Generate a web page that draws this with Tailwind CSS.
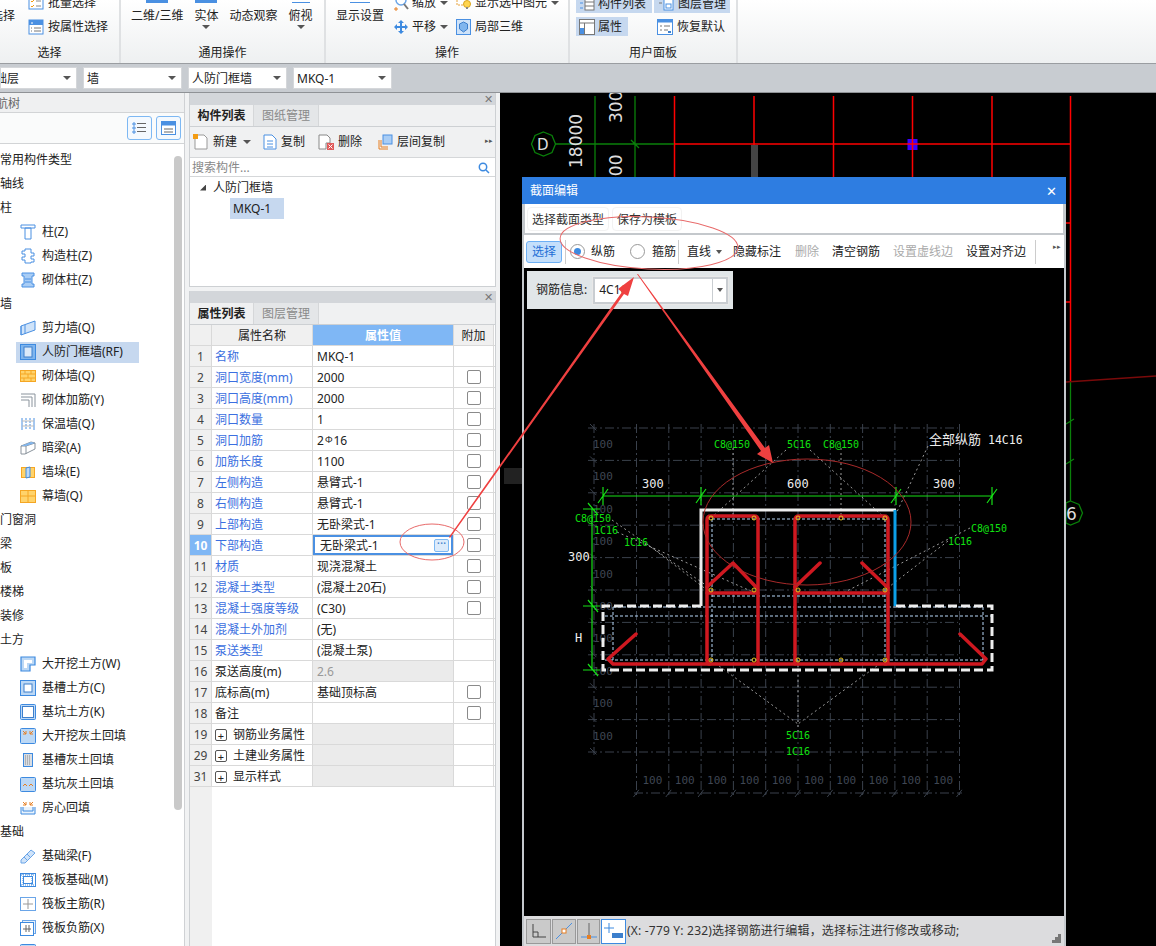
<!DOCTYPE html>
<html lang="zh">
<head>
    <meta charset="UTF-8">
    <title>截面编辑</title>
    <script src="https://cdn.jsdelivr.net/npm/@tailwindcss/browser@4"></script>
</head>
<body class="m-0">
<div class="relative w-[1156px] h-[946px] overflow-hidden bg-[#f1f2f3] text-[12px] leading-4 text-[#222] font-['Noto_Sans','Noto_Sans_CJK_SC',sans-serif]">

    <!-- ribbon -->
    <div class="flex h-[64px] bg-gradient-to-b from-white to-[#eef0f1] border-b border-[#9a9da1] overflow-hidden">
        <div class="flex flex-col -ml-[20px] w-[141px] shrink-0 border-r-2 border-[#dfe1e3]">
            <div class="flex h-[45px]">
                <div class="pl-[11px] pt-[8px] w-[48px]">选择</div>
                <div class="flex flex-col gap-2 -mt-[5px]">
                    <div class="flex items-center gap-[4px]"><svg width="16" height="16" viewBox="0 0 16 16"><rect x="1" y="2" width="14" height="12" fill="#fff" stroke="#4a90e2"/><path d="M3 6l1 1 2-2M3 11l1 1 2-2" stroke="#f39c12" fill="none"/><path d="M8 6h5M8 11h5" stroke="#888"/></svg>批量选择</div>
                    <div class="flex items-center gap-[4px]"><svg width="16" height="16" viewBox="0 0 16 16"><rect x="1" y="1" width="14" height="14" fill="#fff" stroke="#4a90e2"/><rect x="1" y="1" width="14" height="5" fill="#4a90e2"/><path d="M3 4h2" stroke="#fff"/><path d="M3 9h1M6 9h7M3 12h1M6 12h7" stroke="#777"/></svg>按属性选择</div>
                </div>
            </div>
            <div class="text-center">选择</div>
        </div>
        <div class="flex flex-col w-[205px] shrink-0 border-r-2 border-[#dfe1e3]">
            <div class="flex h-[45px] pl-[10px] gap-[11px]">
                <div class="flex flex-col items-center"><span class="w-[22px] h-[3px] bg-[#4a90e2]"></span><span class="mt-[5px]">二维/三维</span></div>
                <div class="flex flex-col items-center"><span class="w-[22px] h-[3px] bg-[#4a90e2]"></span><span class="mt-[5px]">实体</span><span class="mt-[1px] border-x-[4px] border-t-[4px] border-x-transparent border-t-[#555]"></span></div>
                <div class="flex flex-col items-center"><span class="h-[3px]"></span><span class="mt-[5px]">动态观察</span></div>
                <div class="flex flex-col items-center"><span class="w-[18px] h-[3px] border-b border-[#4a90e2]"></span><span class="mt-[5px]">俯视</span><span class="mt-[1px] border-x-[4px] border-t-[4px] border-x-transparent border-t-[#555]"></span></div>
            </div>
            <div class="text-center">通用操作</div>
        </div>
        <div class="flex flex-col w-[244px] shrink-0 border-r-2 border-[#dfe1e3]">
            <div class="flex h-[45px] pl-[10px]">
                <div class="flex flex-col items-center w-[48px]"><span class="w-[20px] h-[3px] border-b border-[#4a90e2]"></span><span class="mt-[5px]">显示设置</span></div>
                <div class="flex flex-col gap-2 -mt-[5px] ml-[9px] w-[63px]">
                    <div class="flex items-center gap-[3px]"><svg width="16" height="16" viewBox="0 0 16 16"><circle cx="8" cy="5" r="5" fill="#fff" stroke="#6aa5e8" stroke-width="1.5"/><path d="M11 9l4 5" stroke="#777" stroke-width="2"/><path d="M1 14h4M3 12v4" stroke="#e67e22"/></svg>缩放<span class="ml-[1px] border-x-[4px] border-t-[4px] border-x-transparent border-t-[#555]"></span></div>
                    <div class="flex items-center gap-[3px]"><svg width="16" height="16" viewBox="0 0 16 16"><path d="M8 1l3 3H9v3h3V5l3 3-3 3V9H9v3h2l-3 3-3-3h2V9H4v2L1 8l3-3v2h3V4H5z" fill="#3d8ae0"/></svg>平移<span class="ml-[1px] border-x-[4px] border-t-[4px] border-x-transparent border-t-[#555]"></span></div>
                </div>
                <div class="flex flex-col gap-2 -mt-[5px]">
                    <div class="flex items-center gap-[4px]"><svg width="15" height="16" viewBox="0 0 15 16"><path d="M1 2h8v8H1z" fill="#fff" stroke="#e6a23c" stroke-dasharray="2 1"/><circle cx="11" cy="9" r="3.5" fill="#ffd54f" stroke="#d9a520"/><path d="M10 13h2" stroke="#888" stroke-width="2"/></svg>显示选中图元<span class="border-x-[4px] border-t-[4px] border-x-transparent border-t-[#555]"></span></div>
                    <div class="flex items-center gap-[4px]"><svg width="15" height="16" viewBox="0 0 15 16"><rect x="0.5" y="0.5" width="14" height="15" fill="#cfe3f9" stroke="#4a90e2"/><path d="M7.5 3l4 2v5l-4 3-4-3V5z" fill="#7fb5ee" stroke="#3d7fcc"/></svg>局部三维</div>
                </div>
            </div>
            <div class="text-center">操作</div>
        </div>
        <div class="flex flex-col w-[168px] shrink-0 border-r-2 border-[#dfe1e3]">
            <div class="h-[50px] pl-[6px] -mt-[5px]">
                <div class="flex gap-[2px] h-[18px]">
                    <div class="flex items-center gap-[3px] w-[76px] pl-[3px] bg-[#c6d8ef]"><svg width="16" height="16" viewBox="0 0 16 16"><path d="M1 2h3M1 7h3M1 12h3" stroke="#4a90e2"/><rect x="6" y="1" width="9" height="13" fill="#fff" stroke="#777"/><path d="M6 6h9M6 10h9" stroke="#777"/></svg>构件列表</div>
                    <div class="flex items-center gap-[4px] w-[76px] pl-[4px] bg-[#c6d8ef]"><svg width="16" height="16" viewBox="0 0 16 16"><path d="M1 3h3M1 7h3" stroke="#777"/><rect x="6" y="1" width="9" height="13" fill="#fff" stroke="#4a90e2"/><rect x="8" y="8" width="5" height="4" fill="#fff" stroke="#4a90e2"/></svg>图层管理</div>
                </div>
                <div class="flex mt-[4px]">
                    <div class="flex items-center gap-[3px] w-[52px] h-[19px] pl-[3px] bg-[#c6d8ef]"><svg width="16" height="16" viewBox="0 0 16 16"><rect x="0.5" y="0.5" width="15" height="15" fill="#fff" stroke="#777"/><path d="M0 4h16M5.500 4v12" stroke="#777"/><rect x="1" y="9" width="4" height="6" fill="#4a90e2"/></svg>属性</div>
                    <div class="flex items-center gap-[4px] ml-[29px]"><svg width="16" height="16" viewBox="0 0 16 16"><rect x="0.5" y="0.5" width="15" height="15" fill="#fff" stroke="#4a90e2"/><rect x="0.5" y="0.5" width="15" height="3" fill="#4a90e2"/><path d="M3 7h2M7 7h6M3 11h2M7 11h4" stroke="#777"/><path d="M11 13l3 0" stroke="#3d7fcc" stroke-width="2"/></svg>恢复默认</div>
                </div>
            </div>
            <div class="text-center">用户面板</div>
        </div>
    </div>

    <!-- component selectors -->
    <div class="flex gap-[6px] h-[29px] pt-[3px] bg-[#c8ccd1] border-b border-[#8f9296]">
        <div class="flex items-center justify-between w-[77px] h-[22px] pr-[5px] bg-white border border-[#d5d7da] overflow-hidden"><span class="-ml-[18px] pt-[1px]">基础层</span><span class="border-x-[4px] border-t-[4px] border-x-transparent border-t-[#555]"></span></div>
        <div class="flex items-center justify-between w-[99px] h-[22px] pl-[3px] pr-[5px] bg-white border border-[#d5d7da]"><span class="pt-[1px]">墙</span><span class="border-x-[4px] border-t-[4px] border-x-transparent border-t-[#555]"></span></div>
        <div class="flex items-center justify-between w-[99px] h-[22px] pl-[3px] pr-[5px] bg-white border border-[#d5d7da]"><span class="pt-[1px]">人防门框墙</span><span class="border-x-[4px] border-t-[4px] border-x-transparent border-t-[#555]"></span></div>
        <div class="flex items-center justify-between w-[99px] h-[22px] pl-[3px] pr-[5px] bg-white border border-[#d5d7da]"><span class="pt-[1px]">MKQ-1</span><span class="border-x-[4px] border-t-[4px] border-x-transparent border-t-[#555]"></span></div>
    </div>

    <div class="flex h-[853px]">
        <!-- navigation tree -->
        <div class="relative w-[185px] shrink-0 bg-white border-r border-[#cfd1d4] overflow-hidden">
            <div class="h-[20px] bg-[#eff0f1] border-b border-[#d2d4d6] text-[#666] leading-[21px]"><span class="-ml-[16px]">导航树</span></div>
            <div class="flex justify-end gap-[4px] h-[31px] pt-[3px] pr-[3px] border-b border-[#d2d4d6] bg-[#fafbfb]">
                <div class="flex items-center justify-center w-[25px] h-[24px] rounded-[3px] border border-[#7db8f3] bg-[#f4f9fe]"><svg width="15" height="14" viewBox="0 0 15 14"><path d="M1 2h2v2H1zM1 6h2v2H1zM1 10h2v2H1z" fill="none" stroke="#4a90e2"/><path d="M5 2.500h9M5 6.500h9M5 10.500h9" stroke="#666"/></svg></div>
                <div class="flex items-center justify-center w-[25px] h-[24px] rounded-[3px] border border-[#7db8f3] bg-[#f4f9fe]"><svg width="15" height="14" viewBox="0 0 15 14"><rect x="0.500" y="0.500" width="14" height="13" fill="#fff" stroke="#4a90e2"/><rect x="0.500" y="0.500" width="14" height="4" fill="#4a90e2"/><path d="M3 8h9M3 11h9" stroke="#666"/></svg></div>
            </div>
            <div id="navTree" class="pt-[4px]"></div>
            <div class="absolute left-[174px] top-[63px] w-[8px] h-[654px] rounded-[4px] bg-[#c9c9c9]"></div>
        </div>

        <!-- list and property panels -->
        <div class="flex flex-col w-[307px] ml-[4px] shrink-0">
            <div class="h-[194px] border-x border-b border-[#cdd0d3] bg-white flex flex-col">
                <div class="relative h-[12px] bg-[#d3d6da]"><span class="absolute right-[2px] -top-[2px] text-[#777] text-[11px]">✕</span></div>
                <div class="flex h-[22px] bg-[#f0f1f2] border-b border-[#cdd0d3]">
                    <div class="w-[64px] text-center leading-[22px] font-bold bg-[#eff0f1] border-r border-[#d5d7d9]">构件列表</div>
                    <div class="w-[65px] text-center leading-[22px] text-[#8a8a8a] bg-[#e4e6e8] border-r border-[#d5d7d9]">图纸管理</div>
                </div>
                <div class="relative flex items-center h-[30px] bg-[#f0f1f2] pl-[3px]">
                    <svg width="15" height="16" viewBox="0 0 15 16"><path d="M2 1h9l3 3v11H2z" fill="#fff" stroke="#999"/><path d="M0 0h5v5H0z" fill="#f39c12"/></svg>
                    <span class="ml-[5px]">新建</span><span class="ml-[6px] border-x-[4px] border-t-[4px] border-x-transparent border-t-[#555]"></span>
                    <svg class="ml-[12px]" width="14" height="16" viewBox="0 0 14 16"><path d="M1 1h8l4 4v10H1z" fill="#fff" stroke="#4a90e2"/><path d="M4 7h6M4 10h6M4 13h6" stroke="#4a90e2"/></svg>
                    <span class="ml-[4px]">复制</span>
                    <svg class="ml-[13px]" width="16" height="16" viewBox="0 0 16 16"><path d="M1 1h8l3 3v5H8v6H1z" fill="#fff" stroke="#888"/><rect x="9" y="9" width="7" height="7" fill="#e05a5a"/><path d="M10.500 10.500l4 4M14.500 10.500l-4 4" stroke="#fff"/></svg>
                    <span class="ml-[4px]">删除</span>
                    <svg class="ml-[16px]" width="15" height="16" viewBox="0 0 15 16"><path d="M1 15V6M1 15h9M3 13V6M3 13h7" stroke="#e67e22" fill="none"/><rect x="5" y="1" width="9" height="9" fill="#a9cdf5" stroke="#4a90e2"/></svg>
                    <span class="ml-[4px]">层间复制</span>
                    <span class="absolute right-[2px] top-[10px] text-[7px] leading-[8px] text-[#555]">▸▸</span>
                </div>
                <div class="flex items-center justify-between h-[20px] pl-[2px] pr-[5px] pt-[1px] bg-white border-y border-[#d5d7d9] text-[#888]">
                    <span>搜索构件...</span>
                    <svg width="12" height="12" viewBox="0 0 12 12"><circle cx="5" cy="5" r="3.700" fill="none" stroke="#3d8ae0" stroke-width="1.500"/><path d="M8 8l3 3" stroke="#3d8ae0" stroke-width="1.500"/></svg>
                </div>
                <div class="flex items-center h-[21px] pl-[10px]"><span class="w-[6px] h-[6px] bg-[#444] [clip-path:polygon(100%_0,100%_100%,0_100%)]"></span><span class="ml-[7px]">人防门框墙</span></div>
                <div class="w-[54px] h-[21px] ml-[40px] pl-[3px] leading-[21px] bg-[#c6d8ef]">MKQ-1</div>
            </div>
            <div class="flex-1 mt-[4px] border-x border-[#cdd0d3] bg-white flex flex-col">
                <div class="relative h-[12px] bg-[#d3d6da]"><span class="absolute right-[2px] -top-[2px] text-[#777] text-[11px]">✕</span></div>
                <div class="flex h-[22px] bg-[#f0f1f2] border-b border-[#cdd0d3]">
                    <div class="w-[64px] text-center leading-[22px] font-bold bg-[#eff0f1] border-r border-[#d5d7d9]">属性列表</div>
                    <div class="w-[65px] text-center leading-[22px] text-[#8a8a8a] bg-[#e4e6e8] border-r border-[#d5d7d9]">图层管理</div>
                </div>
                <div id="propTable"></div>
                <div class="flex-1 w-[22px] bg-[#f0f0f0]"></div>
            </div>
        </div>

        <!-- drawing area -->
        <div class="relative flex-1 ml-[4px] bg-black overflow-hidden">
            <svg class="absolute inset-0" width="656" height="853" viewBox="500 93 656 853">
                <g stroke="#ff0000" stroke-width="1.500">
                    <path d="M674.500 96V177M754 96V145M833.500 96V177M912.500 96V177M992 96V177M1070.500 96V381"/>
                    <path d="M674 144H1070.500"/>
                    <path d="M1066 223h4M1066 302h4"/>
                </g>
                <g stroke="#0a800a" stroke-width="1.300" fill="none">
                    <path d="M595 96V177M635 96V177M555 144H674M631 140l8 8"/>
                    <path d="M543.500 132l8.500 3.500 3.500 8.500-3.500 8.500-8.500 3.500-8.500-3.500-3.500-8.500 3.500-8.500z"/>
                    <path d="M1070.500 381V501M1066 424l8-5M1066 464l8-5"/>
                    <path d="M1070.500 501l8.500 3.500 3.500 8.500-3.500 8.500-8.500 3.500-4.500-2V503z"/>
                </g>
                <path d="M1066 382L1156 376" stroke="#7a0a0a" stroke-width="1.500"/>
                <rect x="751" y="145" width="7" height="32" fill="#444"/>
                <rect x="907.500" y="139" width="10" height="11" fill="#3d00ff"/>
                <path d="M912.500 139v11M907.500 144h10" stroke="#ff0000" stroke-width="1.500"/>
                <rect x="504" y="468" width="18" height="16" fill="#222"/>
                <g fill="#ddd" font-size="17" font-family="'DejaVu Sans'">
                    <text x="0" y="0" transform="translate(622,123) rotate(-90)">300</text>
                    <text x="0" y="0" transform="translate(582,168) rotate(-90)">18000</text>
                    <text x="0" y="0" transform="translate(622,187) rotate(-90)">300</text>
                    <text x="537" y="150" font-size="15">D</text>
                </g>
                <text x="1066" y="520" fill="#ddd" font-size="17" font-family="'DejaVu Sans'">6</text>
            </svg>
            <div class="absolute left-[-4px] top-[407px] flex items-center w-[4px] h-[453px] bg-[#3d4147]"><span class="-mt-[296px] border-y-[3px] border-r-[3px] border-y-transparent border-r-[#9aa0a6]"></span></div>

            <!-- section editor window -->
            <div class="absolute left-[22px] top-[84px] w-[544px] h-[769px] flex flex-col bg-[#c4c8cc] border-x-[2px] border-[#c4c8cc]">
                <div class="flex items-center justify-between h-[27px] -mx-[2px] pl-[8px] pr-[9px] bg-[#2e7de1] text-white"><span>截面编辑</span><span class="text-[13px]">✕</span></div>
                <div class="flex items-center gap-[3px] h-[29px] mx-[1px] bg-white pl-[2px]">
                    <span class="px-[4px] h-[24px] leading-[24px] text-[#333] rounded-sm border border-[#f2f2f2]">选择截面类型</span>
                    <span class="px-[4px] h-[24px] leading-[24px] text-[#333] rounded-sm border border-[#f2f2f2]">保存为模板</span>
                </div>
                <div class="relative flex items-center h-[33px] mt-[2px] bg-white pl-[2px]">
                    <span class="w-[36px] h-[22px] leading-[20px] text-center text-[#1f6fd6] rounded-[3px] bg-[#c4dffb] border border-[#6db0f5]">选择</span>
                    <span class="ml-[3px] w-px h-[24px] bg-[#ccc]"></span>
                    <span class="flex items-center justify-center ml-[4px] w-[15px] h-[15px] rounded-full border border-[#999]"><span class="w-[7px] h-[7px] rounded-full bg-[#3d8ae0]"></span></span>
                    <span class="ml-[6px]">纵筋</span>
                    <span class="ml-[15px] w-[15px] h-[15px] rounded-full border border-[#999]"></span>
                    <span class="ml-[7px]">箍筋</span>
                    <span class="ml-[2px] w-px h-[24px] bg-[#ccc]"></span>
                    <span class="ml-[8px]">直线</span>
                    <span class="ml-[5px] border-x-[3px] border-t-[4px] border-x-transparent border-t-[#555]"></span>
                    <span class="ml-[11px]">隐藏标注</span>
                    <span class="ml-[14px] text-[#aaa]">删除</span>
                    <span class="ml-[13px]">清空钢筋</span>
                    <span class="ml-[13px] text-[#aaa]">设置虚线边</span>
                    <span class="ml-[13px]">设置对齐边</span>
                    <span class="ml-[9px] w-px h-[24px] bg-[#ccc]"></span>
                    <span class="absolute right-[3px] top-[8px] text-[7px] leading-[8px] text-[#555]">▸▸</span>
                </div>
                <div class="relative flex-1 bg-black overflow-hidden">
                    <div class="absolute left-[3px] top-[3px] flex items-center w-[206px] h-[38px] pl-[9px] bg-[#e1e6e8]">
                        <span>钢筋信息:</span>
                        <div class="flex items-center ml-[6px] w-[135px] h-[27px] bg-white border-2 border-[#c9cdd1] outline outline-1 outline-[#e8e8e8]">
                            <span class="flex-1 pl-[4px]">4C16</span>
                            <span class="flex items-center justify-center w-[14px] h-full border-l border-[#c9cdd1]"><span class="border-x-[3px] border-t-[4px] border-x-transparent border-t-[#555]"></span></span>
                        </div>
                    </div>
                    <svg id="cad" class="block" width="540" height="648" viewBox="524 268 540 648"></svg>
                </div>
                <div class="relative flex items-center gap-[1px] h-[30px] pl-[2px] bg-[#dcdcde] text-[#333]">
                    <span class="flex items-center justify-center w-[25px] h-[25px] bg-[#cacaca] border border-[#999]"><svg width="16" height="16" viewBox="0 0 16 16"><path d="M2 1v13h13M2 9h5v5" fill="none" stroke="#444"/></svg></span>
                    <span class="flex items-center justify-center w-[24px] h-[25px] bg-[#cacaca] border border-[#999]"><svg width="18" height="18" viewBox="0 0 18 18"><path d="M1 17L17 1" stroke="#4a90e2"/><rect x="7" y="7" width="4" height="4" fill="#fff" stroke="#e67e22"/></svg></span>
                    <span class="flex items-center justify-center w-[23px] h-[25px] bg-[#cacaca] border border-[#999]"><svg width="18" height="18" viewBox="0 0 18 18"><path d="M1 15h16" stroke="#4a90e2"/><path d="M9 1v13" stroke="#666"/><rect x="7" y="13" width="4" height="4" fill="#e67e22"/></svg></span>
                    <span class="flex items-center justify-center w-[25px] h-[25px] bg-white border border-[#3d8ae0]"><svg width="20" height="18" viewBox="0 0 20 18"><path d="M5 1v10M0 6h10" stroke="#3d8ae0"/><rect x="8" y="11" width="11" height="5" fill="#3d7fcc"/></svg></span>
                    <span class="whitespace-nowrap tracking-[0.2px]">(X: -779 Y: 232)选择钢筋进行编辑，选择标注进行修改或移动;</span>
                    <svg class="absolute right-[3px] bottom-[3px]" width="9" height="9" viewBox="0 0 9 9"><path d="M6 0h3v3H6zM3 3h3v3H3zM6 3h3v3H6zM0 6h3v3H0zM3 6h3v3H3zM6 6h3v3H6z" fill="#777"/></svg>
                </div>
            </div>
        </div>
    </div>

    <!-- hand drawn review marks lying over the screenshot -->
    <svg class="absolute inset-0 pointer-events-none" width="1156" height="946" viewBox="0 0 1156 946">
        <ellipse cx="432" cy="542" rx="32" ry="18" fill="none" stroke="#e86a6a"/>
        <ellipse cx="649" cy="243" rx="89" ry="26" transform="rotate(3 649 243)" fill="none" stroke="#e86a6a"/>
        <ellipse cx="807" cy="522" rx="104" ry="63" fill="none" stroke="#a82a2a"/>
        <path d="M449 537L622 292L618 289L634 277L628 296L624 294L450 538z" fill="#ef4040"/>
        <path d="M637 274L761 451L757 454L773 463L769 445L765 448L638 274z" fill="#ef4040"/>
    </svg>
</div>

<script>
    const ic = {
        zhu: '<path d="M1 1h14v3H1zM5 4h6v11H5z" fill="#fff" stroke="#4a90e2"/>',
        gzz: '<path d="M5 1h6v4h3v3h-3v3h3v3h-3v1H5v-3H2V9h3V6H2V3h3z" fill="#fff" stroke="#4a90e2"/>',
        qtz: '<path d="M2 1h12v3h-2v8h2v3H2v-3h2V4H2z" fill="#a9cdf5" stroke="#4a90e2"/><path d="M5 7h6M5 10h6" stroke="#4a90e2"/>',
        jlq: '<path d="M1 6l14-5v9L1 15z" fill="#cfe3f9" stroke="#4a90e2"/><path d="M1 6v9M5 5v9" stroke="#4a90e2"/>',
        rf: '<rect x="0.500" y="0.500" width="15" height="15" fill="#7fb5ee" stroke="#3d8ae0"/><rect x="4" y="3" width="8" height="10" fill="#dbe9f9" stroke="#3d7fcc"/>',
        qtq: '<rect x="0.500" y="2.500" width="15" height="11" fill="#ffd36b" stroke="#f5a623"/><path d="M1 6h14M1 10h14M5 3v3M11 3v3M8 6v4M4 10v3M11 10v3" stroke="#f5a623"/>',
        qtjj: '<path d="M1 2h14v13M1 5h11v10M1 8h8v7" fill="none" stroke="#8a939c"/>',
        bwq: '<path d="M2 2v12M14 2v12" stroke="#4a90e2"/><path d="M6 2v12M10 2v12" stroke="#4a90e2" stroke-dasharray="2 1"/><path d="M2 5h12M2 10h12" stroke="#bbb"/>',
        al: '<path d="M1 6l10-4 4 1v6L5 14H1z" fill="#fff" stroke="#8a939c"/><path d="M1 6h5v8M6 6l9-3" stroke="#8a939c" fill="none"/><path d="M1 6l10-4 4 1-9 3z" fill="#7fb5ee"/>',
        qd: '<rect x="1.500" y="3.500" width="13" height="10" fill="#ffd36b" stroke="#f5a623"/><path d="M6 4l4-1v10l-4 1z" fill="#bcd8f5" stroke="#3d8ae0"/>',
        mq: '<rect x="0.500" y="2.500" width="15" height="12" fill="#ffd36b" stroke="#f5a623"/><path d="M1 8h14M8 3v11" stroke="#f5a623"/>',
        dkw: '<path d="M1 1h14v8h-5v6H1z" fill="#bcd8f5" stroke="#3d8ae0" stroke-width="1.200"/><path d="M4 4h8v3H7v5H4z" fill="#fff"/>',
        jc: '<rect x="0.500" y="0.500" width="15" height="15" fill="#bcd8f5" stroke="#3d8ae0"/><rect x="4" y="4" width="8" height="8" fill="#fff" stroke="#3d7fcc"/>',
        jk: '<rect x="0.500" y="0.500" width="15" height="15" rx="1" fill="#bcd8f5" stroke="#3d8ae0"/><rect x="2.500" y="2.500" width="11" height="11" fill="#fff" stroke="#3d7fcc"/>',
        dkh: '<rect x="0.500" y="0.500" width="15" height="15" rx="1" fill="#bcd8f5" stroke="#3d8ae0"/><path d="M3 3l3 3M3 6h3V3M13 3l-3 3M13 6h-3V3" stroke="#e67e22" fill="none"/>',
        jch: '<rect x="3.500" y="1.500" width="9" height="13" fill="#d9dde2" stroke="#3d8ae0"/><path d="M5 4h6M5 6h6M5 8h6M5 10h6M5 12h6" stroke="#888" stroke-dasharray="1 1"/>',
        jkh: '<rect x="0.500" y="1.500" width="15" height="14" rx="1" fill="#bcd8f5" stroke="#3d8ae0"/><path d="M3 10l2-2 2 2M9 10l2-2 2 2" stroke="#e67e22" fill="none"/>',
        fx: '<path d="M1 7v7h14V7M3 7v4h10V7" fill="#e8f2fc" stroke="#3d8ae0"/><path d="M3 2l3 3M3 5h3V2M13 2l-3 3M13 5h-3V2" stroke="#e67e22" fill="none"/>',
        jcl: '<path d="M1 12l10-10 4 3L5 15H1z" fill="#cfe3f9" stroke="#6aa5e8"/><path d="M4 9l3 3M7 6l3 3" stroke="#6aa5e8"/>',
        fbjc: '<rect x="0.500" y="1.500" width="15" height="13" fill="#fff" stroke="#3d8ae0"/><rect x="3.500" y="4.500" width="9" height="7" fill="#fff" stroke="#3d8ae0"/><path d="M1 3h14M1 13h14M3 2v12M6 2v3M9 2v3M12 2v12" stroke="#3d8ae0" stroke-dasharray="1 1"/>',
        fbzj: '<rect x="0.500" y="1.500" width="15" height="13" fill="#fff" stroke="#6aa5e8"/><path d="M8 3v10M3 8h10" stroke="#999"/>',
        fbfj: '<rect x="2.500" y="0.500" width="13" height="13" fill="#e8f2fc" stroke="#6aa5e8"/><rect x="0.500" y="2.500" width="13" height="13" fill="#fff" stroke="#3d8ae0"/><path d="M3 9h8M6 5v7M9 5v7" stroke="#666"/>'
    };
    // null icon = category row
    const tree = [
        ['常用构件类型'],['轴线'],['柱'],['柱(Z)','zhu'],['构造柱(Z)','gzz'],['砌体柱(Z)','qtz'],
        ['墙'],['剪力墙(Q)','jlq'],['人防门框墙(RF)','rf',true],['砌体墙(Q)','qtq'],['砌体加筋(Y)','qtjj'],['保温墙(Q)','bwq'],['暗梁(A)','al'],['墙垛(E)','qd'],['幕墙(Q)','mq'],
        ['门窗洞'],['梁'],['板'],['楼梯'],['装修'],['土方'],
        ['大开挖土方(W)','dkw'],['基槽土方(C)','jc'],['基坑土方(K)','jk'],['大开挖灰土回填','dkh'],['基槽灰土回填','jch'],['基坑灰土回填','jkh'],['房心回填','fx'],
        ['基础'],['基础梁(F)','jcl'],['筏板基础(M)','fbjc'],['筏板主筋(R)','fbzj'],['筏板负筋(X)','fbfj'],['','jk']
    ];
    document.getElementById('navTree').innerHTML = tree.map(([name, icon, sel]) => {
        if (!icon) return `<div class="h-6 leading-6 whitespace-nowrap">${name}</div>`;
        const cls = sel ? 'bg-[#c6d8ef] w-[123px]' : 'w-[150px]';
        return `<div class="flex items-center h-6"><div class="flex items-center h-[21px] ml-[16px] pl-[4px] ${cls}"><svg class="mr-[6px] shrink-0" width="16" height="16" viewBox="0 0 16 16">${ic[icon]}</svg><span class="whitespace-nowrap">${name}</span></div></div>`;
    }).join('');

    // no, name, value, name is blue, has checkbox
    const rebar = '2<span class="relative -top-[2px] mx-[1px] text-[9px]">Φ</span>16';
    const props = [
        [1,'名称','MKQ-1',1,0],[2,'洞口宽度(mm)','2000',1,1],[3,'洞口高度(mm)','2000',1,1],[4,'洞口数量','1',1,1],
        [5,'洞口加筋',rebar,1,1],[6,'加筋长度','1100',1,1],[7,'左侧构造','悬臂式-1',1,1],[8,'右侧构造','悬臂式-1',1,1],
        [9,'上部构造','无卧梁式-1',1,1],[10,'下部构造','无卧梁式-1',1,1],[11,'材质','现浇混凝土',1,1],[12,'混凝土类型','(混凝土20石)',1,1],
        [13,'混凝土强度等级','(C30)',1,1],[14,'混凝土外加剂','(无)',1,0],[15,'泵送类型','(混凝土泵)',1,0],[16,'泵送高度(m)','2.6',0,0],
        [17,'底标高(m)','基础顶标高',0,1],[18,'备注','',0,1],[19,'钢筋业务属性','',2,0],[29,'土建业务属性','',2,0],[31,'显示样式','',2,0]
    ];
    const check = '<span class="block w-[14px] h-[14px] rounded-[2px] border border-[#8a8a8a] bg-white"></span>';
    let rows = `<div class="flex h-[21px] border-b border-[#d9d9d9] text-center leading-[21px]">
        <div class="w-[22px] bg-[#f0f0f0] border-r border-[#d9d9d9]"></div>
        <div class="w-[101px] bg-[#f0f0f0] border-r border-[#d9d9d9]">属性名称</div>
        <div class="w-[140px] bg-[#7fb7f5] text-white font-bold">属性值</div>
        <div class="w-[41px] bg-[#f0f0f0] border-x border-[#d9d9d9]">附加</div></div>`;
    rows += props.map(([no, name, val, kind, box]) => {
        const active = no === 10;
        const numCls = active ? 'bg-[#7fb7f5] text-white font-bold' : 'bg-[#f0f0f0] text-[#444]';
        const nameCell = kind === 2
            ? `<span class="flex items-center justify-center w-[12px] h-[12px] mr-[6px] ml-[3px] rounded-[2px] border border-[#555] text-[11px] leading-none">+</span><span>${name}</span>`
            : `<span class="pl-[3px] ${kind === 1 ? 'text-[#3b6fe0]' : ''}">${name}</span>`;
        const greyVal = kind === 2 || no === 16;
        const valCell = active
            ? `<div class="flex items-center justify-between w-[140px] pl-[5px] pr-[2px] border-2 border-[#4a90e2]"><span class="pt-[1px]">${val}</span><span class="w-[15px] h-[13px] rounded-[2px] bg-[#dcebfb] border border-[#7db8f3] text-center text-[#3d7fcc] leading-[8px]">···</span></div>`
            : `<div class="w-[140px] pl-[4px] leading-[22px] ${greyVal ? 'bg-[#ebebeb]' : ''} ${no === 16 ? 'text-[#999]' : ''}">${val}</div>`;
        return `<div class="flex h-[21px] border-b border-[#d9d9d9]">
            <div class="w-[22px] text-center leading-[22px] border-r border-[#d9d9d9] ${numCls}">${no}</div>
            <div class="flex items-center w-[101px] pt-[2px] whitespace-nowrap border-r border-[#d9d9d9]">${nameCell}</div>
            ${valCell}
            <div class="flex items-center justify-center w-[41px] border-x border-[#d9d9d9]">${box ? check : ''}</div></div>`;
    }).join('');
    document.getElementById('propTable').innerHTML = rows;

    // section drawing, page coordinates
    const gx = [...Array(11).keys()].map(i => 636.5 + 32.3 * i);
    const gy = [...Array(11).keys()].map(i => 428 + 32.4 * i);
    let s = '<g stroke="#3a414c" stroke-dasharray="9 3 2 3" fill="none">';
    gx.forEach(x => s += `<path d="M${x} 424V796"/>`);
    gy.forEach(y => s += `<path d="M588 ${y}H958"/>`);
    s += '<path d="M594 424V755M634 793H962"/>';
    gy.forEach(y => s += `<path d="M590 ${y - 4}l8 8"/>`);
    gx.forEach(x => s += `<path d="M${x - 3} 797l6-8"/>`);
    s += '</g><g fill="#3f4653" font-size="11" font-family="\'DejaVu Sans Mono\'">';
    gy.slice(0, 10).forEach(y => s += `<text x="593" y="${y + 20}">100</text>`);
    gx.slice(0, 10).forEach(x => s += `<text x="${x + 6}" y="784">100</text>`);
    s += '</g>';
    s += `<g stroke="#9a9a9a" stroke-dasharray="2 3" fill="none">
        <path d="M928 446L895 516M786 450L711 518M810 450L885 518M733 448V517M841 448V518M612 520L710 588M617 532L753 592M647 544L707 590M970 528L843 593M948 541L885 590M711 660L798 724M885 660L798 724M798 660V732"/></g>`;
    s += `<g stroke="#b8d8f8" stroke-dasharray="3 2" fill="none">
        <path d="M712 519H885M712 596H885M613 607H983M605 616H992M605 660H986M613 607V660M983 607V660M712 519V660M885 519V660"/></g>`;
    s += `<g stroke="#16e016" stroke-width="1.200" fill="none">
        <path d="M603 496H993M603 487V505M701 487V505M896 487V505M992 487V505M598 503l10-14M696 503l10-14M891 503l10-14M987 503l10-14"/>
        <path d="M592 509V670M583 509H600M583 606H600M583 670H600M588 503l10 12M588 600l10 12M588 664l10 12"/></g>`;
    s += `<path d="M701 606V510H896" stroke="#eeeeee" stroke-width="3" fill="none"/>
        <path d="M895 510V606" stroke="#0ca0e8" stroke-width="3"/>
        <path d="M701 606H603V670H992V606H896" stroke="#eeeeee" stroke-width="3" stroke-dasharray="9 4" fill="none"/>`;
    s += `<g stroke="#cf1820" stroke-width="3.500" fill="none" stroke-linejoin="round" stroke-linecap="round">
        <path d="M710 664Q707 664 707 660V520Q707 516 711 516H754Q758 516 758 520V664"/>
        <path d="M795 664V520Q795 516 799 516H884Q888 516 888 520V660Q888 664 885 664"/>
        <path d="M636 634L608 659L613 664H982L986 659L960 634"/>
        <path d="M707 593H758M795 593H888"/>
        <path d="M707 587L733 563L757 588M795 587L820 563M862 563L888 588"/></g>`;
    s += '<g fill="none" stroke="#e0c020">';
    [[711,518],[754,518],[798,518],[841,518],[885,518],[711,590],[754,590],[798,590],[885,590],[711,660],[754,660],[798,660],[841,660],[885,660]]
        .forEach(([x, y]) => s += `<circle cx="${x}" cy="${y}" r="2"/>`);
    s += '</g><g fill="#eeeeee" font-size="12" font-family="\'DejaVu Sans Mono\'">';
    [[642,488,'300'],[787,488,'600'],[933,488,'300'],[568,561,'300'],[575,642,'H']].forEach(([x, y, t]) => s += `<text x="${x}" y="${y}">${t}</text>`);
    s += '<text x="929" y="444" font-family="\'Noto Sans CJK SC\'" font-size="13">全部纵筋<tspan x="988" font-size="11.500" font-family="\'DejaVu Sans Mono\'">14C16</tspan></text></g>';
    s += '<g fill="#10e010" font-size="10" font-family="\'DejaVu Sans Mono\'">';
    [[714,448,'C8@150'],[787,448,'5C16'],[823,448,'C8@150'],[575,522,'C8@150'],[594,534,'1C16'],[624,546,'1C16'],[971,532,'C8@150'],[948,545,'1C16'],[786,739,'5C16'],[786,755,'1C16']]
        .forEach(([x, y, t]) => s += `<text x="${x}" y="${y}">${t}</text>`);
    s += '</g>';
    document.getElementById('cad').innerHTML = s;
</script>
</body>
</html>
